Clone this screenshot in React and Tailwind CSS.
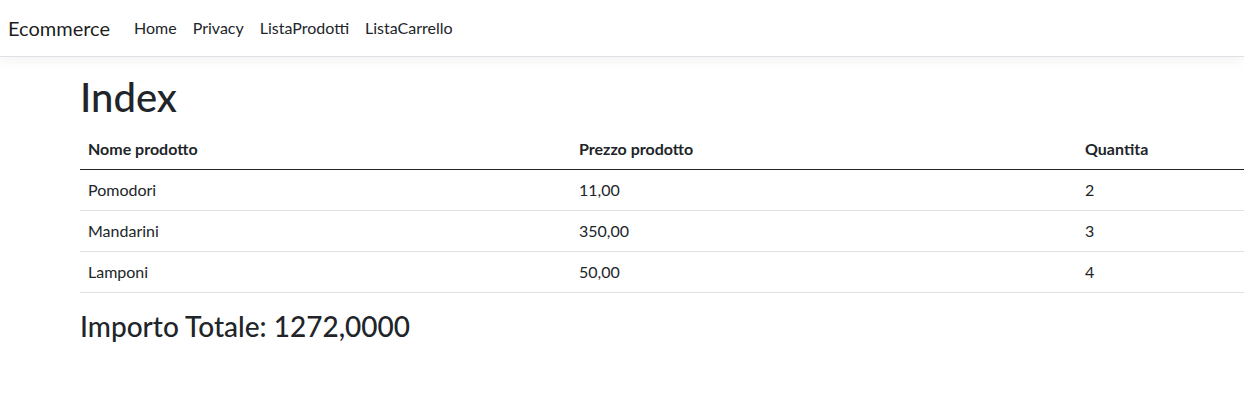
const products = [
  { nome: "Pomodori", prezzo: "11,00", quantita: 2 },
  { nome: "Mandarini", prezzo: "350,00", quantita: 3 },
  { nome: "Lamponi", prezzo: "50,00", quantita: 4 },
];

const links = ["Home", "Privacy", "ListaProdotti", "ListaCarrello"];

export default function App() {
  return (
    <div className="min-h-[410px] bg-white text-[#212529] font-['Segoe_UI','Lato',sans-serif] overflow-hidden">
      <header>
        <nav className="flex h-[57px] items-center border-b border-[#dee2e6] bg-white shadow-[0_4px_12px_rgba(0,0,0,0.05)] pl-2">
          <a className="mr-4 text-[20px] leading-[30px] text-black/90">Ecommerce</a>
          <ul className="flex">
            {links.map((link) => (
              <li key={link}>
                <a className="block px-2 py-2 text-[16px] leading-6 text-[#212529]">{link}</a>
              </li>
            ))}
          </ul>
        </nav>
      </header>

      <main className="mt-4 pl-[80px] pb-4">
        <h1 className="mb-2 text-[40px] font-medium leading-[48px]">Index</h1>
        <table className="mb-4 w-[1180px] border-collapse text-[16px] leading-6">
          <thead>
            <tr className="border-b border-[#212529]">
              <th className="w-[491px] p-2 text-left font-bold">Nome prodotto</th>
              <th className="w-[506px] p-2 text-left font-bold">Prezzo prodotto</th>
              <th className="p-2 text-left font-bold">Quantita</th>
            </tr>
          </thead>
          <tbody>
            {products.map((p) => (
              <tr key={p.nome} className="border-b border-[#dee2e6]">
                <td className="p-2">{p.nome}</td>
                <td className="p-2">{p.prezzo}</td>
                <td className="p-2">{p.quantita}</td>
              </tr>
            ))}
          </tbody>
        </table>
        <h3 className="text-[28px] font-medium leading-[34px]">Importo Totale: 1272,0000</h3>
      </main>
    </div>
  );
}
